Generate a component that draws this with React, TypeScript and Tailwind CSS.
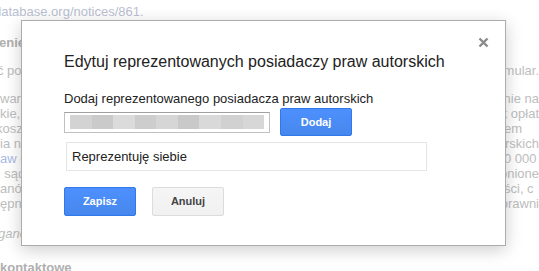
import React from 'react';

// faded page text lying behind the dialog
type Row = { left: React.ReactNode; right?: string; mt: number; cls?: string; shift?: number };

const rows: Row[] = [
  { left: <span className="text-[#b9c0d2]">database.org/notices/861.</span>, mt: 4, shift: -6 },
  { left: 'enie o naruszeniu', mt: 16, cls: 'font-bold text-[#b0b0b0]', shift: -1 },
  { left: 'ć powiadomienie', right: 'mular.', mt: 13, shift: -3 },
  { left: 'warcie', right: 'anie na', mt: 13, shift: 0 },
  { left: 'kie, ', right: 'pt opłat', mt: 0, shift: 0 },
  { left: 'kosz', right: 'em', mt: 0, shift: -4 },
  { left: 'ia n', right: 'utorskich', mt: 0, shift: 0 },
  { left: <><span className="text-[#a9b9e6]">aw</span> c</>, right: '0 000', mt: 0, shift: 0 },
  { left: ', sąd', right: 'pnione', mt: 0, shift: -3 },
  { left: 'anów', right: 'ści, c', mt: 0, shift: 0 },
  { left: 'ępn', right: 'prawni', mt: 0, shift: 0 },
  { left: 'gane', mt: 15, cls: 'italic', shift: -2 },
  { left: 'kontaktowe', mt: 19, cls: 'font-bold text-[#b0b0b0]', shift: 0 },
];

const blur = ['#d3d3d3', '#cacaca', '#dbdbdb', '#cdcdcd', '#d6d6d6', '#c9c9c9', '#d9d9d9', '#d1d1d1', '#d7d7d7'];

export default function App() {
  return (
    <div className="relative w-[539px] h-[271px] overflow-hidden bg-white font-['Liberation_Sans',Arial,sans-serif]">
      <div className="flex flex-col text-[13px] text-[#bdbdbd]">
        {rows.map((r, i) => (
          <div key={i} className="flex h-[15px] items-center" style={{ marginTop: r.mt }}>
            <div className="w-[504px] overflow-hidden whitespace-nowrap">
              <span className={`inline-block ${r.cls ?? ''}`} style={{ marginLeft: r.shift }}>
                {r.left}
              </span>
            </div>
            {r.right && <div className="whitespace-nowrap">{r.right}</div>}
          </div>
        ))}
      </div>

      <div className="absolute left-[21px] top-[20px] w-[485px] h-[226px] bg-white border border-[#acacac] shadow-[0_4px_16px_rgba(0,0,0,0.2)] pl-[42px] pt-[31px]">
        <button className="absolute right-[16px] top-[16px] w-[11px] h-[11px]">
          <svg width="11" height="11" viewBox="0 0 11 11">
            <path d="M1.5 1.5 L9.5 9.5 M9.5 1.5 L1.5 9.5" stroke="#8a8a8a" strokeWidth="2.4" />
          </svg>
        </button>

        <h2 className="text-[16px] leading-[20px] text-[#222]">
          Edytuj reprezentowanych posiadaczy praw autorskich
        </h2>

        <div className="mt-[19px] text-[13px] leading-[16px] text-[#222]">
          Dodaj reprezentowanego posiadacza praw autorskich
        </div>

        <div className="mt-[1px] flex items-center gap-[10px] h-[28px]">
          <div className="w-[206px] h-[21px] border border-[#c0c0c0] border-t-[#a0a0a0] flex items-center px-[5px]">
            <div className="flex h-[14px] w-full">
              {blur.map((c, i) => (
                <div key={i} className="flex-1 h-full" style={{ background: c }} />
              ))}
            </div>
          </div>
          <button className="w-[72px] h-[28px] rounded-[2px] border border-[#3079ed] bg-gradient-to-b from-[#4d90fe] to-[#4787ed] text-white text-[11px] font-bold">
            Dodaj
          </button>
        </div>

        <div className="mt-[6px] ml-[2px] w-[361px] h-[29px] border border-[#e5e5e5] px-[5px] flex items-center text-[13px] text-[#222]">
          Reprezentuję siebie
        </div>

        <div className="mt-[16px] flex gap-[16px]">
          <button className="w-[72px] h-[29px] rounded-[2px] border border-[#3079ed] bg-gradient-to-b from-[#4d90fe] to-[#4787ed] text-white text-[11px] font-bold">
            Zapisz
          </button>
          <button className="w-[72px] h-[29px] rounded-[2px] border border-[#dcdcdc] bg-gradient-to-b from-[#f5f5f5] to-[#f1f1f1] text-[#444] text-[11px] font-bold">
            Anuluj
          </button>
        </div>
      </div>
    </div>
  );
}
